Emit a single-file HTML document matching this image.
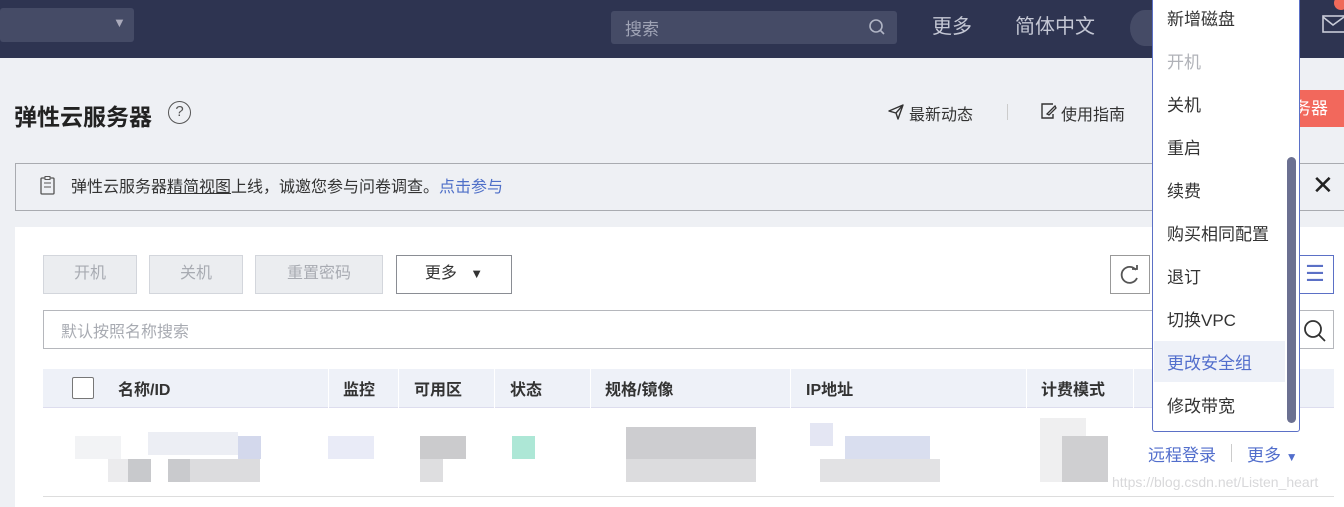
<!DOCTYPE html>
<html><head><meta charset="utf-8"><style>
*{margin:0;padding:0;box-sizing:border-box}
body{width:1344px;height:500px;overflow:hidden;background:#eef0f4;font-family:"Liberation Sans","Noto Sans CJK SC",sans-serif;position:relative;color:#333}
.a{position:absolute}
.hdr{left:0;top:0;width:1344px;height:58px;background:#2e3451}
.btn{position:absolute;height:39px;top:255px;border:1px solid #d3d6dc;background:#ebedf0;color:#a8abb2;font-size:16px;text-align:center;line-height:35px}
.th{position:absolute;top:376px;font-size:16px;font-weight:bold;color:#333}
.sep{position:absolute;top:369px;width:1px;height:39px;background:#fff}
.mi{position:absolute;left:1167px;font-size:17px;color:#333}
.b{position:absolute;width:23px;height:23px}
</style></head><body>
<div class="a hdr"></div>
<div class="a" style="left:0;top:8px;width:134px;height:34px;background:#454b66;border-radius:3px"></div>
<div class="a" style="left:113px;top:15px;color:#aab;font-size:13px">▼</div>
<div class="a" style="left:611px;top:11px;width:286px;height:33px;background:#454b66;border-radius:3px"></div>
<div class="a" style="left:625px;top:15px;color:#a0a4b6;font-size:17px">搜索</div>
<svg class="a" style="left:868px;top:18px" width="20" height="20"><circle cx="8" cy="8" r="6" fill="none" stroke="#b0b4c4" stroke-width="1.6"/><line x1="12.5" y1="12.5" x2="16" y2="16" stroke="#b0b4c4" stroke-width="1.6"/></svg>
<div class="a" style="left:932px;top:10px;color:#c4c7d4;font-size:20px">更多</div>
<div class="a" style="left:1015px;top:10px;color:#c4c7d4;font-size:20px">简体中文</div>
<div class="a" style="left:1130px;top:10px;width:30px;height:36px;background:#454b66;border-radius:50% 0 0 50%"></div>
<svg class="a" style="left:1322px;top:15px" width="22" height="18"><rect x="1" y="1" width="22" height="16" fill="none" stroke="#c8cbd8" stroke-width="1.6"/><polyline points="1,2 11,10 22,2" fill="none" stroke="#c8cbd8" stroke-width="1.6"/></svg>
<div class="a" style="left:1334px;top:-4px;width:14px;height:14px;border-radius:50%;background:#f06a5a"></div>

<div class="a" style="left:14px;top:98px;font-size:23px;font-weight:bold;color:#222">弹性云服务器</div>
<div class="a" style="left:168px;top:101px;width:23px;height:23px;border:1.8px solid #555;border-radius:50%;text-align:center;font-size:15px;line-height:20px;color:#555">?</div>
<svg class="a" style="left:888px;top:104px" width="16" height="16"><path d="M1 7 L15 1 L10 15 L8 9 Z M8 9 L15 1" fill="none" stroke="#333" stroke-width="1.4" stroke-linejoin="round"/></svg>
<div class="a" style="left:909px;top:101px;font-size:16px;color:#333">最新动态</div>
<div class="a" style="left:1007px;top:104px;width:1px;height:16px;background:#ccc"></div>
<svg class="a" style="left:1040px;top:103px" width="17" height="17"><path d="M13 1 H2 V15 H13 V11" fill="none" stroke="#333" stroke-width="1.4"/><path d="M7 11 L15 3 L16 5 L9 12 Z" fill="none" stroke="#333" stroke-width="1.3"/></svg>
<div class="a" style="left:1061px;top:101px;font-size:16px;color:#333">使用指南</div>
<div class="a" style="left:1290px;top:90px;width:54px;height:37px;background:#f2685c;color:#fff;font-size:17px;line-height:37px;padding-left:4px">务器</div>

<div class="a" style="left:15px;top:163px;width:1340px;height:48px;border:1.5px solid #a9abb0;background:#eef0f4"></div>
<svg class="a" style="left:39px;top:176px" width="18" height="20"><rect x="2" y="2" width="13" height="16" rx="1" fill="none" stroke="#555" stroke-width="1.3"/><line x1="5" y1="7" x2="12" y2="7" stroke="#555"/><line x1="5" y1="11" x2="12" y2="11" stroke="#555"/><rect x="6" y="0.5" width="5" height="3" fill="#eef0f4" stroke="#555"/></svg>
<div class="a" style="left:71px;top:173px;font-size:16px;color:#333">弹性云服务器<u>精简视图</u>上线，诚邀您参与问卷调查。<span style="color:#4e6fc8">点击参与</span></div>
<div class="a" style="left:1312px;top:170px;font-size:26px;color:#222">✕</div>

<div class="a" style="left:15px;top:227px;width:1340px;height:280px;background:#fff"></div>
<div class="btn" style="left:43px;width:94px">开机</div>
<div class="btn" style="left:149px;width:94px">关机</div>
<div class="btn" style="left:255px;width:128px">重置密码</div>
<div class="btn" style="left:396px;width:116px;background:#fff;border-color:#8a8d94;color:#333">更多 &nbsp;&nbsp;<span style="font-size:13px">▼</span></div>
<div class="btn" style="left:1110px;width:40px;background:#fff;border-color:#999"></div>
<svg class="a" style="left:1119px;top:264px" width="22" height="22"><path d="M17 6 A8 8 0 1 0 18 14" fill="none" stroke="#555" stroke-width="1.8"/><path d="M13 5 L18 5 L18 1" fill="none" stroke="#555" stroke-width="1.8"/></svg>
<div class="btn" style="left:1296px;width:38px;background:#fff;border-color:#5b70c6;color:#5b70c6;font-size:22px">☰</div>
<div class="a" style="left:43px;top:310px;width:1291px;height:39px;border:1px solid #b5b7bc;background:#fff"></div>
<div class="a" style="left:61px;top:318px;font-size:16px;color:#a8abb2">默认按照名称搜索</div>
<svg class="a" style="left:1302px;top:318px" width="26" height="26"><circle cx="11" cy="11" r="8" fill="none" stroke="#333" stroke-width="1.8"/><line x1="17" y1="17" x2="23" y2="23" stroke="#333" stroke-width="1.8"/></svg>

<div class="a" style="left:43px;top:369px;width:1291px;height:39px;background:#eef1f8;border-bottom:1px solid #dde"></div>
<div class="a" style="left:72px;top:377px;width:22px;height:22px;border:1.5px solid #777;background:#fff;border-radius:2px"></div>
<div class="th" style="left:118px">名称/ID</div>
<div class="sep" style="left:328px"></div><div class="th" style="left:343px">监控</div>
<div class="sep" style="left:398px"></div><div class="th" style="left:414px">可用区</div>
<div class="sep" style="left:494px"></div><div class="th" style="left:510px">状态</div>
<div class="sep" style="left:590px"></div><div class="th" style="left:605px">规格/镜像</div>
<div class="sep" style="left:790px"></div><div class="th" style="left:806px">IP地址</div>
<div class="sep" style="left:1026px"></div><div class="th" style="left:1041px">计费模式</div>
<div class="sep" style="left:1133px"></div>

<div class="b" style="left:75px;top:436px;background:#f2f3f5;width:46px"></div>
<div class="b" style="left:148px;top:432px;background:#eceef4;width:90px"></div>
<div class="b" style="left:238px;top:436px;background:#d3d8ec"></div>
<div class="b" style="left:108px;top:459px;background:#ebebed"></div>
<div class="b" style="left:128px;top:459px;background:#c8c9cc"></div>
<div class="b" style="left:168px;top:459px;background:#c9cacd"></div>
<div class="b" style="left:190px;top:459px;background:#dcdcde;width:70px"></div>
<div class="b" style="left:328px;top:436px;background:#e9ebf7;width:46px"></div>
<div class="b" style="left:420px;top:436px;background:#cbcbcd;width:46px"></div>
<div class="b" style="left:420px;top:459px;background:#dedee0"></div>
<div class="b" style="left:512px;top:436px;background:#ade7d6"></div>
<div class="b" style="left:626px;top:427px;background:#cdcdd0;width:130px;height:32px"></div>
<div class="b" style="left:626px;top:459px;background:#dcdcde;width:130px"></div>
<div class="b" style="left:810px;top:423px;background:#e4e6f3"></div>
<div class="b" style="left:845px;top:436px;background:#d9deef;width:85px"></div>
<div class="b" style="left:820px;top:459px;background:#e2e2e4;width:120px"></div>
<div class="b" style="left:1040px;top:418px;background:#efeff0;width:46px;height:64px"></div>
<div class="b" style="left:1062px;top:436px;background:#cfcfd1;width:46px;height:46px"></div>
<div class="a" style="left:43px;top:496px;width:1291px;height:1px;background:#ddd"></div>

<div class="a" style="left:1148px;top:441px;font-size:17px;color:#526ecc">远程登录</div>
<div class="a" style="left:1231px;top:444px;width:1px;height:18px;background:#ccc"></div>
<div class="a" style="left:1247px;top:441px;font-size:17px;color:#526ecc">更多 <span style="font-size:12px">▼</span></div>
<div class="a" style="left:1112px;top:474px;font-size:14px;color:#d8d8da">https://blog.csdn.net/Listen_heart</div>

<div class="a" style="left:1152px;top:-2px;width:148px;height:434px;background:#fff;border:1.5px solid #5b70c6;border-radius:0 0 3px 3px"></div>
<div class="a" style="left:1154px;top:341px;width:131px;height:41px;background:#eef1f8"></div>
<div class="a" style="left:1287px;top:157px;width:9px;height:266px;background:#6b7091;border-radius:5px"></div>
<div class="mi" style="top:5px">新增磁盘</div>
<div class="mi" style="top:48px;color:#b0b2b8">开机</div>
<div class="mi" style="top:91px">关机</div>
<div class="mi" style="top:134px">重启</div>
<div class="mi" style="top:177px">续费</div>
<div class="mi" style="top:220px">购买相同配置</div>
<div class="mi" style="top:263px">退订</div>
<div class="mi" style="top:306px">切换VPC</div>
<div class="mi" style="top:349px;color:#526ecc">更改安全组</div>
<div class="mi" style="top:392px">修改带宽</div>
</body></html>
